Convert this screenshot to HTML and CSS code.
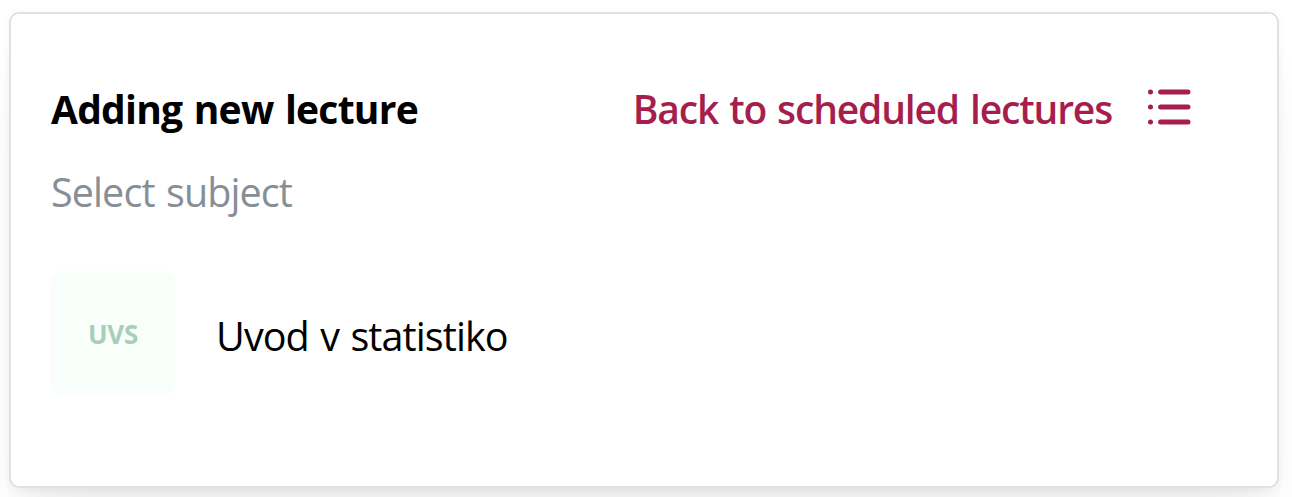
FILE: index.html
```html
<!doctype html>
<html>
<head>
<meta charset="utf-8">
<title>Adding new lecture</title>
<link rel="stylesheet" href="styles.css">
</head>

<body>
	<div class="card">
		<div class="header">
			<h1 class="title">Adding new lecture</h1>
			<a class="back" href="#">
				<span class="back-text">Back to scheduled lectures</span>
				<svg class="icon" width="44" height="36" viewBox="0 0 44 36" fill="none" stroke="currentColor" stroke-width="5" stroke-linecap="round">
					<path d="M12.6 3H40M12.6 18H40M12.6 33H40M2.5 3v.01M2.5 18v.01M2.5 33v.01"/>
				</svg>
			</a>
		</div>
		<p class="hint">Select subject</p>
		<div class="subject">
			<div class="avatar"><span>UVS</span></div>
			<span class="name">Uvod v statistiko</span>
		</div>
	</div>
</body>
</html>
```
FILE: styles.css
```css
*{margin:0; padding:0; box-sizing:border-box;}
body{height:497px; padding:12px 0 0 9px; background:#fff; overflow:hidden; font-family:"Open Sans","Noto Sans",sans-serif; font-size:39.5px; line-height:56px; color:#000; white-space:nowrap; word-spacing:2px;}
.card{width:1270px; height:476px; padding:67px 40px 0; background:#fff; border:2px solid #dee2e6; border-radius:10px; box-shadow:0 2px 8px rgba(0,0,0,0.05),0 52px 65px -13px rgba(0,0,0,0.05),0 26px 26px -13px rgba(0,0,0,0.04);}
.header{display:flex; justify-content:space-between; padding-right:45px;}
.title{font-size:39px; font-weight:700; letter-spacing:-0.75px;}
.back{display:flex; color:#a61e4d; text-decoration:none; font-size:39px; font-weight:600;}
.back-text{letter-spacing:-1.15px;}
.icon{margin:8px 0 0 36px;}
.hint{margin-top:27px; color:#868e96; letter-spacing:-0.9px;}
.subject{display:flex; margin-top:51px;}
.avatar{display:flex; align-items:center; justify-content:center; width:125px; height:125px; margin-right:40px; padding-right:1px; background:#f8fffb; border-radius:12px; color:#a9cdb8; font-size:26px; font-weight:700; letter-spacing:-0.3px;}
.name{padding-top:37px; letter-spacing:-0.9px;}
```
